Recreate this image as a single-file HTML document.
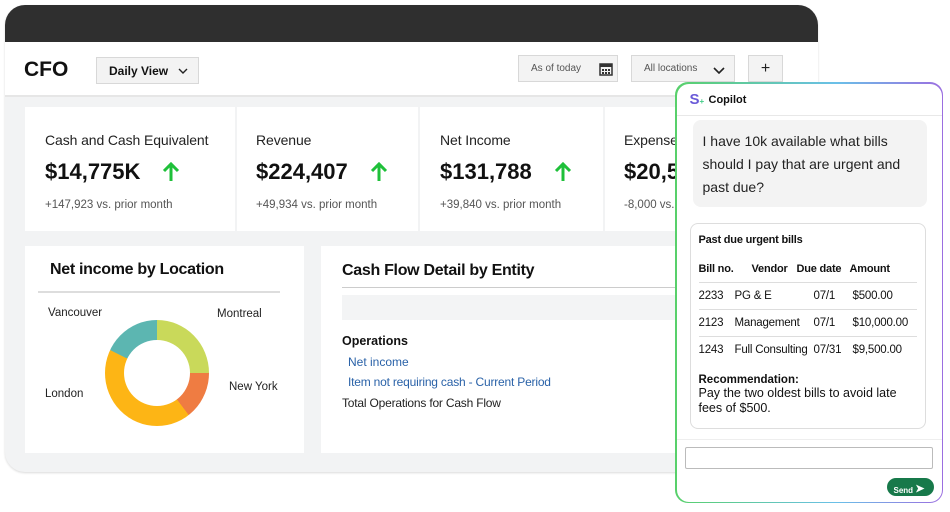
<!DOCTYPE html>
<html><head><meta charset="utf-8"><style>
*{box-sizing:border-box;margin:0;padding:0}
body{width:950px;height:512px;background:#fff;font-family:"Liberation Sans",sans-serif;position:relative;overflow:hidden;color:#111}
.a{position:absolute}
.frame{left:5px;top:5px;width:813px;height:467px;border-radius:20px 20px 0 0;background:#f2f3f4;overflow:hidden;border-bottom-left-radius:20px;box-shadow:0 1px 2px rgba(0,0,0,.15)}
.card{background:#fff;position:absolute}
.btn{position:absolute;background:#f3f3f3;border:1px solid #d8d8d8;font-size:10px;color:#555;display:flex;align-items:center;line-height:1}
.kt{font-size:14px;color:#222;letter-spacing:-.1px}
.kv{font-size:22px;font-weight:bold;margin-top:11px;display:flex;align-items:center;height:26px}
.kv svg{margin-left:22px}
.ks{font-size:11.5px;color:#555;margin-top:14px}
.lbl{font-size:12px;color:#222;position:absolute}
td{font-size:11.5px;padding:0;height:27px;border-top:1px solid #ddd;white-space:nowrap}
</style></head><body>
<div class="a frame">
 <div class="a" style="left:0;top:0;width:813px;height:37px;background:#2f2f2f"></div>
 <div class="a" style="left:0;top:37px;width:813px;height:55px;background:#fff;border-bottom:2px solid #e6e6e6"></div>
</div>
<div class="a" style="left:24px;top:58px;font-size:21px;font-weight:bold">CFO</div>
<div class="btn" style="left:96px;top:57px;width:103px;height:27px;font-size:12px;color:#111;font-weight:bold;padding-left:12px">Daily View <svg width="10" height="6" style="margin-left:10px" viewBox="0 0 10 6"><path d="M1 1l4 4 4-4" stroke="#222" stroke-width="1.4" fill="none"/></svg></div>
<div class="btn" style="left:518px;top:55px;width:100px;height:27px;padding-left:12px">As of today <svg width="14" height="14" style="margin-left:18px" viewBox="0 0 14 14"><rect x="1" y="2" width="12" height="11" fill="none" stroke="#333" stroke-width="1.5"/><rect x="1" y="2" width="12" height="3" fill="#333"/><path d="M3 7h2v2H3zM6 7h2v2H6zM9 7h2v2H9zM3 10h2v2H3zM6 10h2v2H6zM9 10h2v2H9z" fill="#333"/></svg></div>
<div class="btn" style="left:631px;top:55px;width:104px;height:27px;padding-left:12px">All locations <svg width="12" height="7" style="margin-left:16px;margin-top:4px" viewBox="0 0 12 7"><path d="M1 1l5 5 5-5" stroke="#222" stroke-width="1.6" fill="none"/></svg></div>
<div class="btn" style="left:748px;top:55px;width:35px;height:27px;justify-content:center;font-size:16px;color:#222">+</div>

<div class="card" style="left:25px;top:107px;width:210px;height:124px;padding:25px 0 0 20px"><div class="kt">Cash and Cash Equivalent</div><div class="kv">$14,775K<svg width="18" height="20" viewBox="0 0 18 20"><path d="M9 19V3M2 9l7-7 7 7" stroke="#1fc03a" stroke-width="3" fill="none"/></svg></div><div class="ks">+147,923 vs. prior month</div></div>
<div class="card" style="left:237px;top:107px;width:181px;height:124px;padding:25px 0 0 19px"><div class="kt">Revenue</div><div class="kv">$224,407<svg width="18" height="20" viewBox="0 0 18 20"><path d="M9 19V3M2 9l7-7 7 7" stroke="#1fc03a" stroke-width="3" fill="none"/></svg></div><div class="ks">+49,934 vs. prior month</div></div>
<div class="card" style="left:420px;top:107px;width:183px;height:124px;padding:25px 0 0 20px"><div class="kt">Net Income</div><div class="kv">$131,788<svg width="18" height="20" viewBox="0 0 18 20"><path d="M9 19V3M2 9l7-7 7 7" stroke="#1fc03a" stroke-width="3" fill="none"/></svg></div><div class="ks">+39,840 vs. prior month</div></div>
<div class="card" style="left:605px;top:107px;width:150px;height:124px;padding:25px 0 0 19px"><div class="kt">Expenses</div><div class="kv">$20,500</div><div class="ks">-8,000 vs. prior month</div></div>

<div class="card" style="left:25px;top:246px;width:279px;height:207px">
 <div class="a" style="left:25px;top:15px;font-size:16px;font-weight:bold;letter-spacing:-.3px">Net income by Location</div>
 <div class="a" style="left:13px;top:45px;width:242px;height:2px;background:#ddd"></div>
</div>
<div class="a" style="left:105px;top:320px;width:104px;height:106px;border-radius:50%;background:conic-gradient(#c9d95a 0 90deg,#ef7c42 90deg 143deg,#fdb515 143deg 296deg,#5cb6b1 296deg 360deg)"></div>
<div class="a" style="left:124px;top:340px;width:66px;height:66px;border-radius:50%;background:#fff"></div>
<div class="lbl" style="left:48px;top:307px;font-size:11.5px">Vancouver</div>
<div class="lbl" style="left:217px;top:308px;font-size:11.5px">Montreal</div>
<div class="lbl" style="left:229px;top:381px;font-size:11.5px">New York</div>
<div class="lbl" style="left:45px;top:388px;font-size:11.5px">London</div>

<div class="card" style="left:321px;top:246px;width:400px;height:207px">
 <div class="a" style="left:21px;top:16px;font-size:16px;font-weight:bold;letter-spacing:-.3px">Cash Flow Detail by Entity</div>
 <div class="a" style="left:21px;top:41px;width:380px;height:1px;background:#ccc"></div>
 <div class="a" style="left:21px;top:49px;width:380px;height:25px;background:#f3f4f5"></div>
 <div class="a" style="left:21px;top:88px;font-size:12.5px;font-weight:bold">Operations</div>
 <div class="a" style="left:27px;top:109px;font-size:12px;color:#2a62a8">Net income</div>
 <div class="a" style="left:27px;top:129px;font-size:12px;color:#2a62a8;letter-spacing:-.2px">Item not requiring cash - Current Period</div>
 <div class="a" style="left:21px;top:150px;font-size:12px;color:#222;letter-spacing:-.2px">Total Operations for Cash Flow</div>
</div>

<div class="a" style="left:675px;top:82px;width:268px;height:421px;border-radius:13px;background:linear-gradient(90deg,#58d06a,#6ac0e8 60%,#9b6ee0);padding:1.5px">
 <div style="width:100%;height:100%;background:#fff;border-radius:12px;position:relative">
  <div class="a" style="left:13px;top:7px;font-size:15px;font-weight:bold;color:#6a5ad8">S<span style="font-size:8px;color:#4c8">+</span></div>
  <div class="a" style="left:32px;top:10px;font-size:11px;font-weight:bold">Copilot</div>
  <div class="a" style="left:0;top:31px;width:100%;height:1px;background:#e8e8e8"></div>
  <div class="a" style="left:16px;top:36px;width:234px;height:87px;background:#f3f3f3;border-radius:8px;padding:10px 0 0 10px;font-size:14px;line-height:23px;color:#222">I have 10k available what bills should I pay that are urgent and past due?</div>
  <div class="a" style="left:13px;top:139px;width:236px;height:206px;border:1px solid #ddd;border-radius:8px;padding:10px 8px">
   <div style="font-size:11px;font-weight:bold;letter-spacing:-.2px">Past due urgent bills</div>
   <table style="border-collapse:collapse;margin-top:10px;width:218px;table-layout:fixed;letter-spacing:-.2px">
    <tr style="font-weight:bold"><td style="border:0;height:20px;width:53px;font-size:11px">Bill no.</td><td style="border:0;width:45px;font-size:11px">Vendor</td><td style="border:0;width:53px;font-size:11px">Due date</td><td style="border:0;font-size:11px">Amount</td></tr>
    <tr><td>2233</td><td style="position:relative;left:-17px">PG &amp; E</td><td style="padding-left:17px">07/1</td><td style="padding-left:3px">$500.00</td></tr>
    <tr><td>2123</td><td style="position:relative;left:-17px">Management</td><td style="padding-left:17px">07/1</td><td style="padding-left:3px">$10,000.00</td></tr>
    <tr><td>1243</td><td style="position:relative;left:-17px">Full Consulting</td><td style="padding-left:17px">07/31</td><td style="padding-left:3px">$9,500.00</td></tr>
   </table>
   <div style="font-size:11.5px;font-weight:bold;margin-top:10px">Recommendation:</div>
   <div style="font-size:12.5px;line-height:15px">Pay the two oldest bills to avoid late fees of $500.</div>
  </div>
  <div class="a" style="left:0;top:355px;width:100%;height:1px;background:#eee"></div>
  <div class="a" style="left:8px;top:363px;width:248px;height:22px;border:1px solid #bbb;border-radius:2px"></div>
  <div class="a" style="left:210px;top:394px;width:47px;height:18px;background:#17794a;border-radius:9px;color:#fff;font-size:8px;font-weight:bold;padding:5px 0 0 7px">Send <span style="font-size:11px;position:relative;top:-1px">➤</span></div>
 </div>
</div>
</body></html>
